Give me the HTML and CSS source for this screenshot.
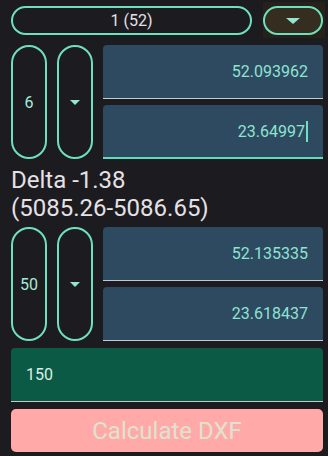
FILE: index.html
```html
<!DOCTYPE html>
<html lang="en">
<head>
    <meta charset="UTF-8">
    <meta name="viewport" content="width=device-width, initial-scale=1.0">
    <title>DXF Calculator</title>
    <link rel="stylesheet" href="styles.css">
</head>
<body>
    <div class="screen">
        <div class="top-row">
            <div class="pill pill-wide">1 (52)</div>
            <div class="drop-wrap">
                <div class="pill pill-drop"><span class="tri"></span></div>
            </div>
        </div>

        <div class="point-row">
            <div class="pill pill-tall">6</div>
            <div class="pill pill-tall"><span class="tri tri-small"></span></div>
            <div class="fields">
                <div class="field">52.093962</div>
                <div class="field focused">23.64997<span class="cursor"></span></div>
            </div>
        </div>

        <div class="delta">Delta -1.38<br>(5085.26-5086.65)</div>

        <div class="point-row">
            <div class="pill pill-tall">50</div>
            <div class="pill pill-tall"><span class="tri tri-small"></span></div>
            <div class="fields">
                <div class="field">52.135335</div>
                <div class="field">23.618437</div>
            </div>
        </div>

        <div class="field field-green">150</div>

        <button type="button" class="btn" disabled>Calculate DXF</button>
    </div>
</body>
</html>
```

FILE: styles.css
```css
body {
    margin: 0;
    background-color: #1c1b1f;
    font-family: Roboto, "Noto Sans", sans-serif;
}
.screen {
    padding: 6px 5px 0 11px;
}
.top-row {
    display: flex;
    gap: 11px;
    height: 29px;
}
.pill {
    box-sizing: border-box;
    border: 2px solid #6fe0bd;
    border-radius: 18px;
    display: flex;
    align-items: center;
    justify-content: center;
    font-size: 16px;
}
.pill-wide {
    flex: 1;
    color: #e6e1e5;
}
.drop-wrap {
    width: 60px;
    background-color: #262219;
    margin: -4px -2px -3px 0;
    padding: 4px 2px 3px 0;
}
.pill-drop {
    height: 29px;
    background-color: #342d20;
}
.tri {
    width: 0;
    height: 0;
    border-left: 7px solid transparent;
    border-right: 7px solid transparent;
    border-top: 6px solid #8fe8cf;
}
.tri-small {
    border-left-width: 5px;
    border-right-width: 5px;
    border-top-width: 5px;
}
.point-row {
    display: flex;
    gap: 10px;
    margin-top: 10px;
}
.pill-tall {
    width: 36px;
    height: 114px;
    color: #a6ecd9;
}
.fields {
    flex: 1;
    display: flex;
    flex-direction: column;
    gap: 6px;
}
.field {
    box-sizing: border-box;
    height: 54px;
    background-color: #2d4a60;
    border-radius: 4px 4px 0 0;
    border-bottom: 1px solid #c3c9cf;
    display: flex;
    align-items: center;
    justify-content: flex-end;
    padding-right: 15px;
    font-size: 16px;
    color: #8fe3d3;
}
.field.focused {
    border-bottom: 2px solid #5fdcb8;
}
.cursor {
    display: inline-block;
    width: 2px;
    height: 21px;
    background-color: #6fe0bd;
    margin-left: 1px;
}
.delta {
    color: #e6e1e5;
    font-size: 24px;
    line-height: 28px;
    margin: 7px 0 5px;
}
.delta + .point-row {
    margin-top: 0;
}
.field-green {
    margin-top: 7px;
    background-color: #0b5a45;
    justify-content: flex-start;
    padding-left: 15px;
    color: #dcefe6;
}
.btn {
    display: block;
    width: 100%;
    height: 43px;
    margin-top: 7px;
    border: none;
    border-radius: 5px;
    background-color: #ffaaa9;
    color: #e0e2cf;
    font-family: Roboto, "Noto Sans", sans-serif;
    font-size: 24px;
}
```
